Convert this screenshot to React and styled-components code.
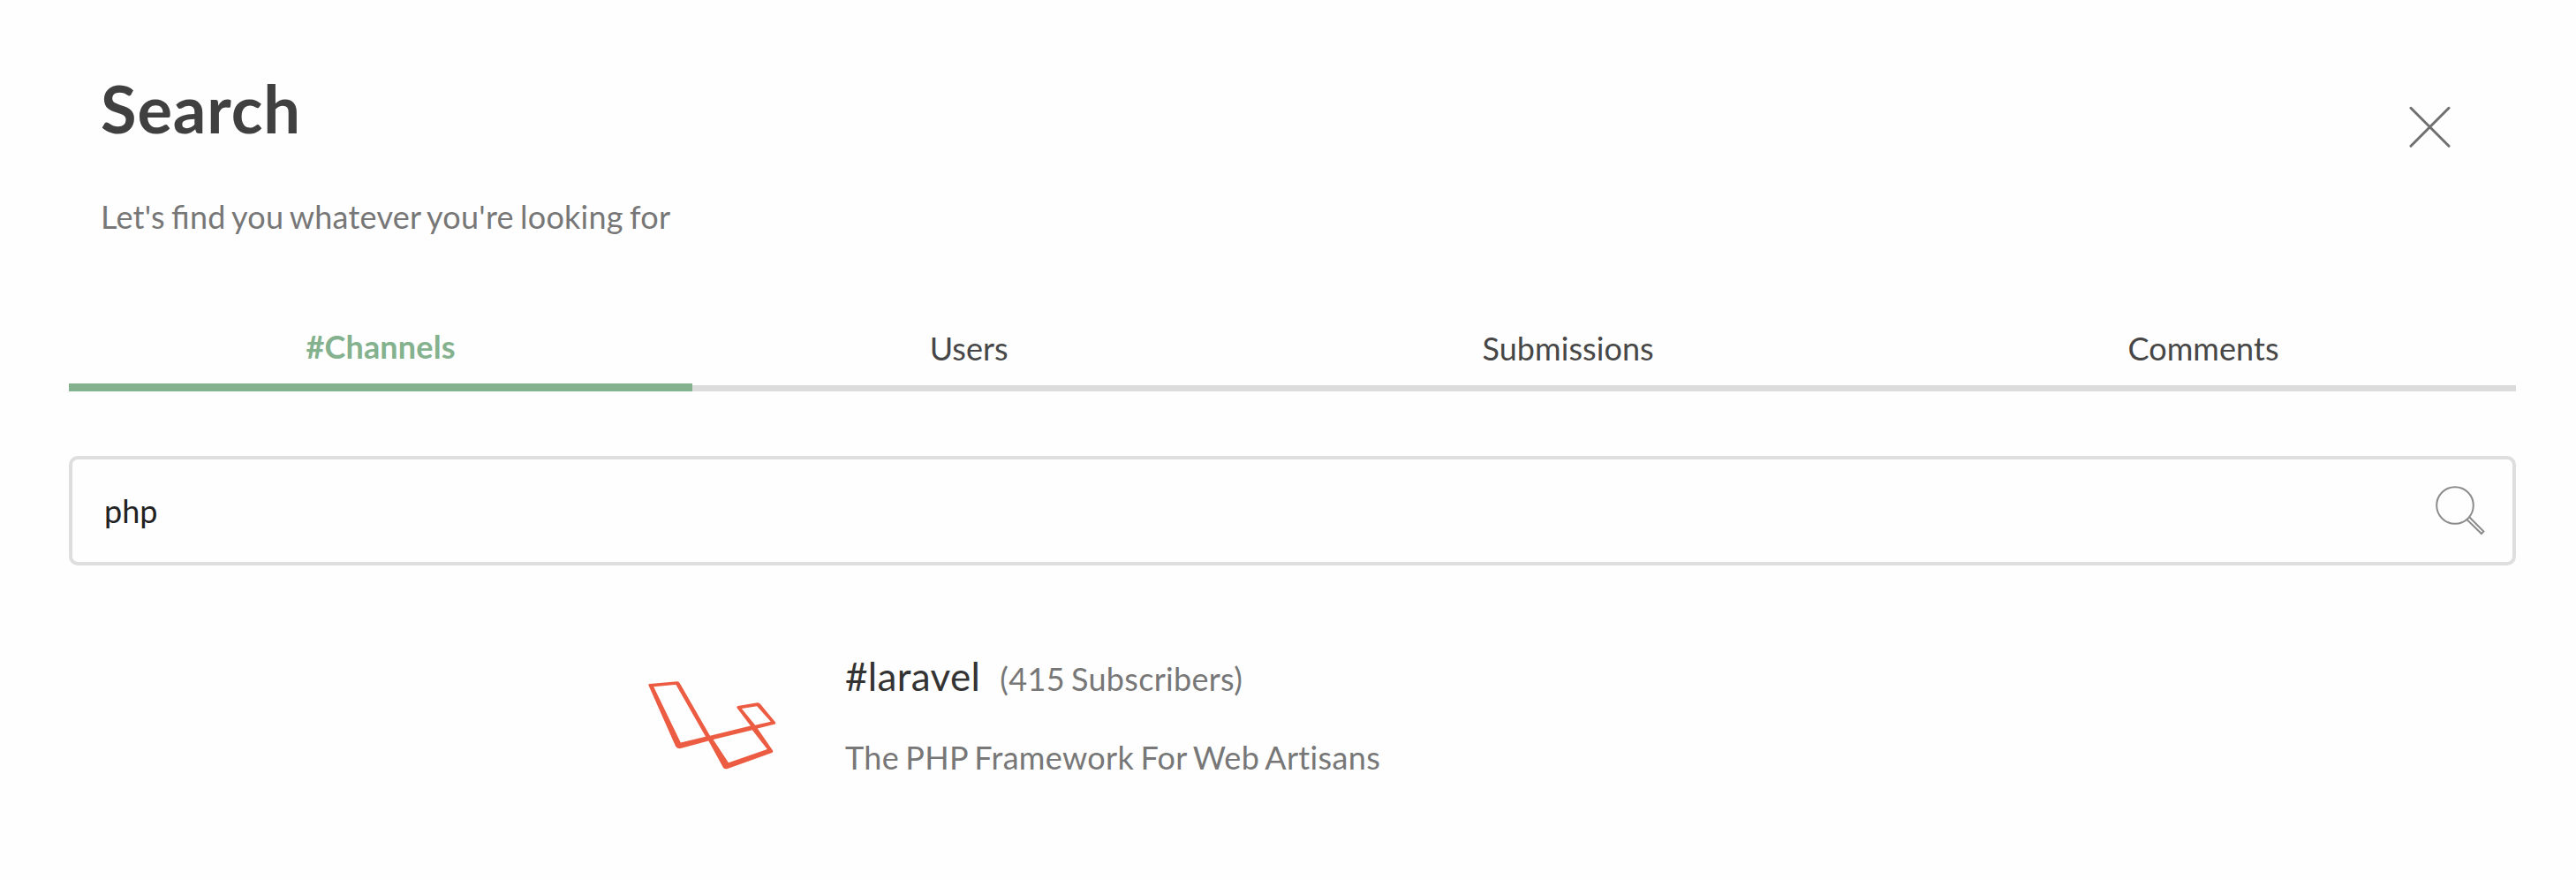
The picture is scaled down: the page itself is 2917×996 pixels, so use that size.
import React, { useState } from "react";
import styled, { createGlobalStyle } from "styled-components";

const GlobalStyle = createGlobalStyle`
  *, *::before, *::after { box-sizing: border-box; }
  body {
    margin: 0;
    background: #fefefe;
    font-family: Lato, "Liberation Sans", sans-serif;
    font-size: 36px;
    line-height: 44px;
    color: #474747;
  }
`;

const Page = styled.main`
  min-height: 996px;
  padding: 78px 68px 0 78px;
`;

const Header = styled.header`
  display: flex;
  justify-content: space-between;
  align-items: flex-start;
  padding: 0 74px 0 36px;
`;

const Title = styled.h1`
  margin: 0;
  font-size: 74px;
  line-height: 90px;
  font-weight: 700;
  letter-spacing: 0.9px;
  color: #404040;
`;

const Subtitle = styled.p`
  margin: 55px 0 0;
  letter-spacing: 0.26px;
  word-spacing: -2.3px;
  font-feature-settings: "liga" 1;
  color: #777;
`;

const CloseButton = styled.button`
  display: flex;
  margin: 42px 0 0;
  padding: 0;
  border: 0;
  background: none;
  color: #707070;
  cursor: pointer;
`;

const Tabs = styled.nav`
  display: flex;
  align-items: flex-end;
  margin-top: 103px;
`;

const Tab = styled.button`
  flex: 1 1 auto;
  padding: 0 0 20px;
  border: 0;
  border-bottom: ${(p) => (p.$active ? "9px solid #84b18e" : "7px solid #dbdbdb")};
  background: none;
  font: inherit;
  font-weight: ${(p) => (p.$active ? 700 : 400)};
  letter-spacing: ${(p) => (p.$active ? "0.18px" : "0.06px")};
  color: ${(p) => (p.$active ? "#84b18e" : "#474747")};
  text-align: center;
  cursor: pointer;
`;

const SearchBox = styled.label`
  display: flex;
  align-items: center;
  height: 124px;
  margin-top: 73px;
  padding: 0 31px 0 36px;
  border: 4px solid #dedede;
  border-radius: 10px;
  color: #8c8c8c;
`;

const SearchInput = styled.input`
  flex: 1;
  height: 44px;
  padding: 0;
  border: 0;
  outline: 0;
  background: none;
  font: inherit;
  color: #222;
`;

const Result = styled.article`
  display: flex;
  align-items: flex-start;
  gap: 78px;
  margin: 99px 0 0 656px;
`;

const Logo = styled.svg`
  flex: none;
  width: 145px;
  height: 100px;
  margin-top: 32px;
`;

const ResultHeading = styled.div`
  display: flex;
  align-items: baseline;
  gap: 22px;
  height: 52px;
`;

const ChannelName = styled.h2`
  margin: 0;
  font-size: 44px;
  line-height: 52px;
  font-weight: 400;
  letter-spacing: 0.35px;
  color: #333;
`;

const Subscribers = styled.span`
  letter-spacing: 0.3px;
  word-spacing: -2.3px;
  color: #777;
`;

const Description = styled.p`
  margin: 44px 0 0;
  letter-spacing: 0.34px;
  word-spacing: -2.3px;
  color: #777;
`;

const TABS = ["#Channels", "Users", "Submissions", "Comments"];

const CloseIcon = () => (
  <svg width="47" height="47" viewBox="0 0 47 47" fill="none" stroke="currentColor" strokeWidth="3" strokeLinecap="round">
    <path d="M2 2.3L45 45.3M45 2.3L2 45.3" />
  </svg>
);

const SearchIcon = () => (
  <svg width="56" height="57" viewBox="0 0 56 57" fill="none" stroke="currentColor" strokeWidth="2">
    <circle cx="22" cy="22" r="20.8" />
    <path d="M35.4 38L51.9 54L54.4 51.5L38.2 35.2" />
  </svg>
);

const LaravelLogo = () => (
  <Logo viewBox="102 152 435 301" aria-label="Laravel">
    <path
      fill="#ec5c42"
      fillRule="evenodd"
      d="M102 165Q103 161 107 161L200 153Q206 153 209 159L312 338L450 304L404 243Q402 237 407 236L474 225Q480 225 484 230L535 292Q537 298 531 299L474 313L526 388Q528 393 523 396L372 450Q362 453 357 446L307 355L212 381Q200 383 195 374ZM120 171L196 164L297 341L212 361ZM323 351L456 318L507 384L375 430ZM420 245L472 237L519 290L466 302Z"
    />
  </Logo>
);

export default function App() {
  const [active, setActive] = useState(TABS[0]);
  const [query, setQuery] = useState("php");

  return (
    <>
      <GlobalStyle />
      <Page>
        <Header>
          <div>
            <Title>Search</Title>
            <Subtitle>Let's find you whatever you're looking for</Subtitle>
          </div>
          <CloseButton aria-label="Close">
            <CloseIcon />
          </CloseButton>
        </Header>
        <Tabs>
          {TABS.map((name) => (
            <Tab key={name} $active={name === active} onClick={() => setActive(name)}>
              {name}
            </Tab>
          ))}
        </Tabs>
        <SearchBox>
          <SearchInput value={query} onChange={(e) => setQuery(e.target.value)} />
          <SearchIcon />
        </SearchBox>
        <Result>
          <LaravelLogo />
          <div>
            <ResultHeading>
              <ChannelName>#laravel</ChannelName>
              <Subscribers>(415 Subscribers)</Subscribers>
            </ResultHeading>
            <Description>The PHP Framework For Web Artisans</Description>
          </div>
        </Result>
      </Page>
    </>
  );
}
